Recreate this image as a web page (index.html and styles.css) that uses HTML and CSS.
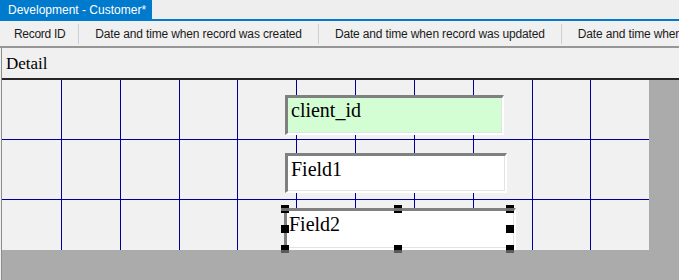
FILE: index.html
```html
<!DOCTYPE html>
<html lang="en">
<head>
    <meta charset="UTF-8">
    <title>Development - Customer*</title>
    <link rel="stylesheet" href="styles.css">
</head>
<body>
    <div class="tabstrip">
        <div class="tab">Development - Customer*</div>
    </div>

    <div class="toolbar">
        <span class="tool">Record ID</span>
        <span class="sep"></span>
        <span class="tool">Date and time when record was created</span>
        <span class="sep"></span>
        <span class="tool">Date and time when record was updated</span>
        <span class="sep"></span>
        <span class="tool">Date and time when record was deleted</span>
    </div>

    <div class="designer">
        <div class="band">Detail</div>
        <div class="workspace">
            <div class="surface">
                <div class="field key-field">client_id</div>
                <div class="field field1">Field1</div>
                <div class="field field2 selected">
                    Field2
                    <span class="handle h-tl"></span>
                    <span class="handle h-tm"></span>
                    <span class="handle h-tr"></span>
                    <span class="handle h-ml"></span>
                    <span class="handle h-mr"></span>
                    <span class="handle h-bl"></span>
                    <span class="handle h-bm"></span>
                    <span class="handle h-br"></span>
                </div>
            </div>
        </div>
    </div>
</body>
</html>
```

FILE: styles.css
```css
* {
    margin: 0;
    padding: 0;
    box-sizing: border-box;
}

html, body {
    width: 679px;
    height: 280px;
    overflow: hidden;
    background: #f0f0f0;
    font-family: "Liberation Sans", Arial, sans-serif;
}

.tabstrip {
    height: 21px;
    border-bottom: 2px solid #007acc;
    background: #eeeeee;
}

.tab {
    display: inline-block;
    height: 19px;
    width: 152px;
    padding: 1px 0 0 8px;
    line-height: 18px;
    font-size: 12px;
    color: #ffffff;
    background: #007acc;
    white-space: nowrap;
}

.toolbar {
    display: flex;
    align-items: center;
    height: 27px;
    background: #f0f0f0;
    white-space: nowrap;
    overflow: hidden;
    border-bottom: 2px solid #969696;
}

.tool {
    padding: 0 16px;
    padding-top: 1px;
    font-size: 12px;
    line-height: 25px;
    letter-spacing: -0.15px;
    color: #1b1b1b;
    flex-shrink: 0;
}

.tool:first-child {
    padding-left: 14px;
    padding-right: 13px;
    letter-spacing: -0.3px;
}

.sep {
    width: 1px;
    height: 20px;
    background: #cfcfcf;
    flex-shrink: 0;
}

.designer {
    margin-left: 1px;
    border-left: 1px solid #8c8c8c;
}

.band {
    height: 32px;
    padding: 2px 0 0 4px;
    line-height: 28px;
    font-family: "Liberation Serif", "Times New Roman", serif;
    font-size: 17px;
    color: #000;
    background: #f0f0f0;
    border-bottom: 2px solid #262626;
}

.workspace {
    height: 200px;
    background: #ababab;
}

.surface {
    position: relative;
    width: 647px;
    height: 170px;
    background-color: #f1f1f1;
    background-image:
        linear-gradient(#000099, #000099),
        linear-gradient(#000099, #000099),
        linear-gradient(#000099, #000099),
        linear-gradient(#000099, #000099),
        linear-gradient(#000099, #000099),
        linear-gradient(#000099, #000099),
        linear-gradient(#000099, #000099),
        linear-gradient(#000099, #000099),
        linear-gradient(#000099, #000099),
        linear-gradient(#000099, #000099),
        linear-gradient(#000099, #000099),
        linear-gradient(#000099, #000099);
    background-repeat: no-repeat;
    background-size:
        1px 100%, 1px 100%, 1px 100%, 1px 100%, 1px 100%,
        1px 100%, 1px 100%, 1px 100%, 1px 100%, 1px 100%,
        100% 1px, 100% 1px;
    background-position:
        59px 0, 118px 0, 177px 0, 235px 0, 294px 0,
        353px 0, 412px 0, 471px 0, 530px 0, 588px 0,
        0 59px, 0 119px;
}

/* text boxes sit on the design canvas at their own coordinates */
.field {
    position: absolute;
    height: 40px;
    padding: 1px 2px 0 3px;
    font-family: "Liberation Serif", "Times New Roman", serif;
    font-size: 20px;
    color: #000;
    background: #ffffff;
    border-style: solid;
    border-width: 3px 2px 2px 3px;
    border-color: #808080 #ffffff #ffffff #808080;
    box-shadow: inset -1px -1px 0 #e3e3e3;
    white-space: nowrap;
}

.key-field {
    left: 283px;
    top: 15px;
    width: 219px;
    background: #d3fdd3;
}

.field1 {
    left: 283px;
    top: 73px;
    width: 222px;
    padding-top: 2px;
}

.field2 {
    left: 282px;
    top: 128px;
    width: 232px;
    height: 42px;
    padding-top: 2px;
    padding-left: 2px;
}

.handle {
    position: absolute;
    width: 8px;
    height: 8px;
    background: #000;
}

.h-tl, .h-tm, .h-tr {
    top: -6px;
    background: linear-gradient(#000 0 3px, #6e6e6e 3px 6px, #000 6px);
}

.h-ml, .h-mr {
    top: 14px;
}

.h-bl, .h-bm, .h-br {
    top: 34px;
    background: linear-gradient(#000 0 5px, #5a5a5a 5px);
}

.h-tl, .h-ml, .h-bl {
    left: -6px;
}

.h-tm, .h-bm {
    left: 107px;
}

.h-tr, .h-mr, .h-br {
    left: 219px;
}
```
